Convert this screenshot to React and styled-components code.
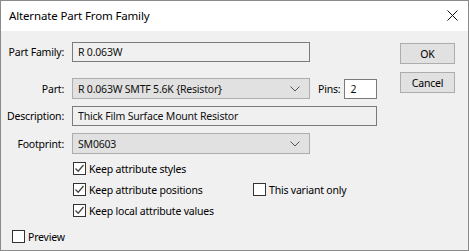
import React from 'react'
import styled, { createGlobalStyle } from 'styled-components';

const GlobalStyle = createGlobalStyle`
  html, body {
    margin: 0;
    padding: 0;
    background: #ffffff;
  }
  * {
    box-sizing: border-box;
  }
`;

function ChevronDown() {
  return (
    <svg width="10" height="6" viewBox="0 0 10 6">
      <path d="M0.5 0.5 L5 5 L9.5 0.5" fill="none" stroke="#555" strokeWidth="1" />
    </svg>
  )
}

function CheckBox({ checked, label }) {
  return (
    <CheckLabel>
      <Box>
        {checked && (
          <svg width="11" height="11" viewBox="0 0 11 11">
            <path d="M1.5 5.5 L4.2 8.2 L9.5 2" fill="none" stroke="#444" strokeWidth="1.3" />
          </svg>
        )}
      </Box>
      <span>{label}</span>
    </CheckLabel>
  )
}

function App() {
  return (
    <>
      <GlobalStyle />
      <Window>
        <TitleBar>
          <span>Alternate Part From Family</span>
          <CloseButton>
            <svg width="11" height="11" viewBox="0 0 11 11">
              <path d="M0.5 0.5 L10.5 10.5 M10.5 0.5 L0.5 10.5" stroke="#111" strokeWidth="1" />
            </svg>
          </CloseButton>
        </TitleBar>

        <Body>
          <Main>
            <Form>
              <Row $mt={11}>
                <Label>Part Family:</Label>
                <TextBox $w={238}>R 0.063W</TextBox>
              </Row>

              <Row $mt={16}>
                <Label>Part:</Label>
                <Select $w={238}>
                  <span>R 0.063W SMTF 5.6K {'{Resistor}'}</span>
                  <ChevronDown />
                </Select>
                <PinsLabel>Pins:</PinsLabel>
                <TextBox $w={33} $white>2</TextBox>
              </Row>

              <Row $mt={7}>
                <Label>Description:</Label>
                <TextBox $w={305}>Thick Film Surface Mount Resistor</TextBox>
              </Row>

              <Row $mt={7}>
                <Label>Footprint:</Label>
                <Select $w={238}>
                  <span>SM0603</span>
                  <ChevronDown />
                </Select>
              </Row>

              <Checks>
                <CheckBox checked label="Keep attribute styles" />
                <CheckPair>
                  <CheckBox checked label="Keep attribute positions" />
                  <CheckBox label="This variant only" />
                </CheckPair>
                <CheckBox checked label="Keep local attribute values" />
              </Checks>
            </Form>

            <Buttons>
              <Button>OK</Button>
              <Button>Cancel</Button>
            </Buttons>
          </Main>

          <Footer>
            <CheckBox label="Preview" />
          </Footer>
        </Body>
      </Window>
    </>
  )
}

const Window = styled.div`
  width: 469px;
  height: 251px;
  border: 1px solid #8a8a8a;
  display: flex;
  flex-direction: column;
  font-family: "Noto Sans", "Open Sans", sans-serif;
  font-size: 10.5px;
  letter-spacing: -0.2px;
  color: #000;
  overflow: hidden;
`;

const TitleBar = styled.div`
  height: 30px;
  background: #ffffff;
  display: flex;
  align-items: center;
  justify-content: space-between;
  padding: 0 10px 0 8px;
  font-size: 11.5px;
  letter-spacing: -0.15px;
  span {
    padding-bottom: 1px;
  }
`;

const CloseButton = styled.div`
  display: flex;
  align-items: center;
  margin-bottom: 1px;
`;

const Body = styled.div`
  flex: 1;
  background: #f0f0f0;
  display: flex;
  flex-direction: column;
`;

const Main = styled.div`
  display: flex;
`;

const Form = styled.div`
  display: flex;
  flex-direction: column;
  width: 399px;
`;

const Row = styled.div`
  display: flex;
  align-items: center;
  margin-top: ${p => p.$mt}px;
`;

const Label = styled.div`
  width: 63px;
  text-align: right;
  margin-right: 8px;
  white-space: nowrap;
`;

const TextBox = styled.div`
  width: ${p => p.$w}px;
  height: 20px;
  border: 1px solid #7a7a7a;
  background: ${p => (p.$white ? '#ffffff' : '#f0f0f0')};
  display: flex;
  align-items: center;
  padding: 0 5px;
  white-space: nowrap;
  color: #111;
`;

const Select = styled.div`
  width: ${p => p.$w}px;
  height: 21px;
  border: 1px solid #adadad;
  background: #e1e1e1;
  display: flex;
  align-items: center;
  justify-content: space-between;
  padding: 0 9px 0 5px;
  white-space: nowrap;
  color: #111;
  svg {
    margin-top: 1px;
  }
`;

const PinsLabel = styled.div`
  margin: 0 4px 0 8px;
`;

const Checks = styled.div`
  display: flex;
  flex-direction: column;
  gap: 8px;
  margin-top: 8px;
  padding-left: 72px;
`;

const CheckPair = styled.div`
  display: flex;
  & > label:first-child {
    width: 180px;
  }
`;

const CheckLabel = styled.label`
  display: flex;
  align-items: center;
  gap: 3px;
  height: 13px;
  white-space: nowrap;
`;

const Box = styled.div`
  width: 13px;
  height: 13px;
  border: 1px solid #333;
  background: #ffffff;
  display: flex;
  align-items: center;
  justify-content: center;
  flex-shrink: 0;
`;

const Buttons = styled.div`
  display: flex;
  flex-direction: column;
  gap: 8px;
  padding-top: 12px;
`;

const Button = styled.div`
  width: 55px;
  height: 21px;
  border: 1px solid #adadad;
  background: #e1e1e1;
  display: flex;
  align-items: center;
  justify-content: center;
`;

const Footer = styled.div`
  margin-top: 13px;
  padding-left: 11px;
`;

export default App
